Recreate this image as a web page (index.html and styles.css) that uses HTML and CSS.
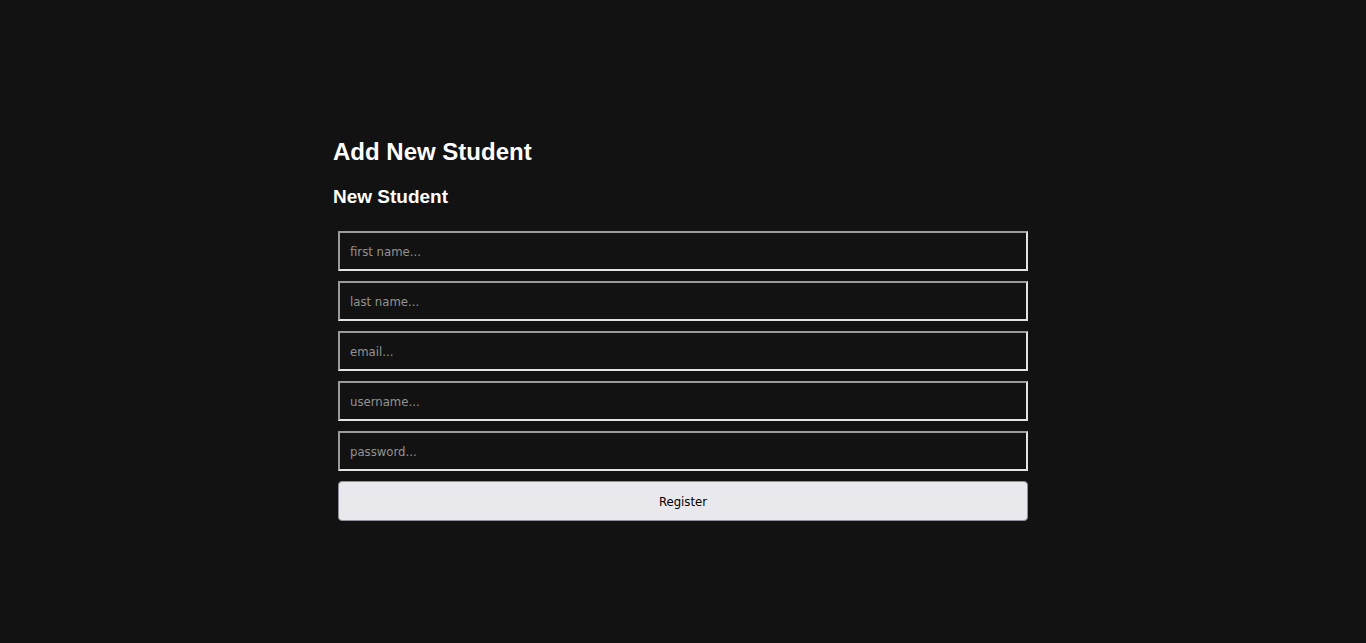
FILE: index.html
```html
<!DOCTYPE html>
<html>
<head>
<meta charset="utf-8">
<link rel="stylesheet" href="styles.css">
</head>
<body>
<main class="page">
  <h1 class="title">Add New Student</h1>
  <h3 class="subtitle">New Student</h3>
  <form class="form">
    <input class="field" type="text" placeholder="first name...">
    <input class="field" type="text" placeholder="last name...">
    <input class="field" type="email" placeholder="email...">
    <input class="field" type="text" placeholder="username...">
    <input class="field" type="password" placeholder="password...">
    <button class="btn" type="button">Register</button>
  </form>
</main>
</body>
</html>
```
FILE: styles.css
```css
html, body {
  margin: 0;
  padding: 0;
  background: #121212;
  color: #fff;
  font-family: "Liberation Sans", Arial, sans-serif;
}
.page {
  width: 700px;
  margin: 0 auto;
  padding-top: 135px;
}
.title {
  font-size: 24px;
  font-weight: bold;
  margin: 0 0 17px 0;
  line-height: 34px;
}
.subtitle {
  font-size: 19px;
  font-weight: bold;
  margin: 0 0 23px 0;
  line-height: 22px;
}
.form {
  display: flex;
  flex-direction: column;
  gap: 10px;
  padding: 0 5px;
}
.field {
  box-sizing: border-box;
  height: 40px;
  width: 100%;
  margin: 0;
  padding: 0 10px;
  background: #121212;
  color: #fff;
  border-style: solid;
  border-width: 2px;
  border-color: #9a9a9a #e3e3e3 #e3e3e3 #9a9a9a;
  font-family: "DejaVu Sans Condensed", "DejaVu Sans", sans-serif;
  font-stretch: condensed;
  font-size: 13px;
  outline: none;
}
.field::placeholder {
  color: #939393;
}
.btn {
  box-sizing: border-box;
  height: 40px;
  width: 100%;
  margin: 0;
  background: #e9e9ed;
  border: 1px solid #8f8f9d;
  border-radius: 4px;
  color: #000;
  font-family: "DejaVu Sans Condensed", "DejaVu Sans", sans-serif;
  font-stretch: condensed;
  font-size: 13px;
}
```
